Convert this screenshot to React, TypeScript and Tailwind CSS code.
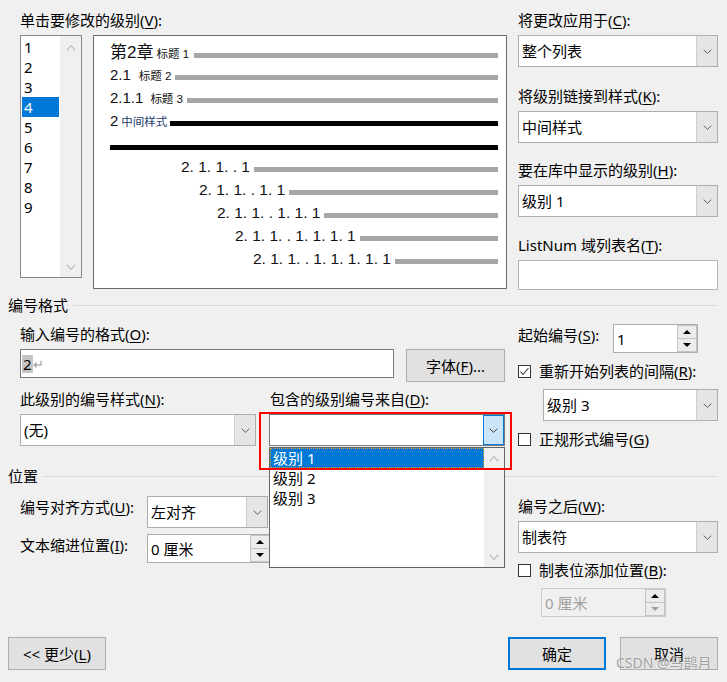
import React from 'react'

function Chevron({ up = false, color = '#606060', w = 9, h = 5, sw = 1 }: { up?: boolean; color?: string; w?: number; h?: number; sw?: number }) {
  const d = up ? `M0.7 ${h - 0.7}L${w / 2} 0.7L${w - 0.7} ${h - 0.7}` : `M0.7 0.7L${w / 2} ${h - 0.7}L${w - 0.7} 0.7`
  return (
    <svg width={w} height={h} viewBox={`0 0 ${w} ${h}`} className="block">
      <path d={d} fill="none" stroke={color} strokeWidth={sw} />
    </svg>
  )
}

function Tri({ up = false, color = '#000' }: { up?: boolean; color?: string }) {
  return (
    <svg width="8" height="4" viewBox="0 0 8 4" className="block">
      <polygon points={up ? '0,4 4,0 8,4' : '0,0 8,0 4,4'} fill={color} />
    </svg>
  )
}

function Select({ value, className = '' }: { value: string; className?: string }) {
  return (
    <div className={`flex h-[32px] border border-[#adadad] bg-white ${className}`}>
      <div className="flex flex-1 items-center overflow-hidden whitespace-nowrap pl-[3px]">{value}</div>
      <div className="flex w-[21px] items-center justify-center border-l border-[#cfcfcf] bg-[#e5e5e5]">
        <Chevron />
      </div>
    </div>
  )
}

function Spin({ value, className = '', disabled = false }: { value: string; className?: string; disabled?: boolean }) {
  return (
    <div
      className={`flex h-[29px] border ${disabled ? 'border-[#cccccc] bg-[#f0f0f0] text-[#a0a0a0]' : 'border-[#adadad] bg-white'} ${className}`}
    >
      <div className="flex flex-1 items-center whitespace-nowrap pl-[3px]">{value}</div>
      <div className="flex w-[20px] flex-col">
        <div className="flex flex-1 items-center justify-center border border-[#c4c4c4] bg-[#ececec]">
          <Tri up />
        </div>
        <div className="flex flex-1 items-center justify-center border border-t-0 border-[#c4c4c4] bg-[#ececec]">
          <Tri color={disabled ? '#a0a0a0' : '#000'} />
        </div>
      </div>
    </div>
  )
}

function Check({ checked = false }: { checked?: boolean }) {
  return (
    <div className="flex h-[13px] w-[13px] items-center justify-center border border-[#333333] bg-white">
      {checked && (
        <svg width="11" height="11" viewBox="0 0 11 11">
          <path d="M1.5 5.5L4 8.5L9.5 2" fill="none" stroke="#333" strokeWidth="1.1" />
        </svg>
      )}
    </div>
  )
}

function Btn({ children, className = '', primary = false }: { children: React.ReactNode; className?: string; primary?: boolean }) {
  return (
    <div
      className={`flex h-[33px] w-[98px] items-center justify-center bg-[#e1e1e1] ${primary ? 'border-2 border-[#0078d7]' : 'border border-[#adadad]'} ${className}`}
    >
      {children}
    </div>
  )
}

function Key({ k }: { k: string }) {
  return <u className="underline-offset-2">{k}</u>
}

const levels = ['1', '2', '3', '4', '5', '6', '7', '8', '9']

const deepRows = [
  { indent: 'ml-[71px]', text: '2. 1. 1. . 1' },
  { indent: 'ml-[89px]', text: '2. 1. 1. . 1. 1' },
  { indent: 'ml-[107px]', text: '2. 1. 1. . 1. 1. 1' },
  { indent: 'ml-[125px]', text: '2. 1. 1. . 1. 1. 1. 1' },
  { indent: 'ml-[143px]', text: '2. 1. 1. . 1. 1. 1. 1. 1' },
]

export default function App() {
  return (
    <div className="relative h-[682px] w-[727px] overflow-hidden bg-[#f0f0f0] font-['Noto_Sans','Noto_Sans_CJK_SC',sans-serif] text-[15px] leading-[18px] text-black">
      {/* top: level list, preview, right options */}
      <div className="flex pt-[11px]">
        <div className="ml-[20px] flex flex-col">
          <div>
            单击要修改的级别(<Key k="V" />):
          </div>
          <div className="mt-[6px] flex items-start gap-[11px]">
            <div className="flex h-[243px] w-[62px] border border-[#828790] bg-white">
              <div className="flex flex-1 flex-col px-[1px] pt-[1px]">
                {levels.map((l) => (
                  <div
                    key={l}
                    className={`flex h-[20px] items-center pl-[2px] ${l === '4' ? 'bg-[#0078d7] text-white' : ''}`}
                  >
                    {l}
                  </div>
                ))}
              </div>
              <div className="flex w-[21px] flex-col items-center justify-between bg-[#f0f0f0] pb-[7px] pt-[9px]">
                <Chevron up color="#c2c2c2" w={10} h={6} sw={1.4} />
                <Chevron color="#c2c2c2" w={10} h={6} sw={1.4} />
              </div>
            </div>

            <div className="flex h-[254px] w-[414px] flex-col border border-[#6b6b6b] bg-white pl-[16px] pr-[8px] pt-[8px] font-['Liberation_Sans','Noto_Sans_CJK_SC',sans-serif] text-[#111]">
              <div className="flex h-[23px] items-baseline">
                <span className="text-[17px] leading-none">第2章</span>
                <span className="ml-[3px] text-[11.5px] leading-none">标题 1</span>
                <div className="ml-[5px] h-[5px] flex-1 bg-[#a6a6a6]" />
              </div>
              <div className="flex h-[23px] items-baseline">
                <span className="text-[15px] leading-none">2.1</span>
                <span className="ml-[8px] text-[11.5px] leading-none">标题 2</span>
                <div className="ml-[4px] h-[5px] flex-1 bg-[#a6a6a6]" />
              </div>
              <div className="flex h-[23px] items-baseline">
                <span className="text-[15px] leading-none">2.1.1</span>
                <span className="ml-[7px] text-[11.5px] leading-none">标题 3</span>
                <div className="ml-[4px] h-[5px] flex-1 bg-[#a6a6a6]" />
              </div>
              <div className="flex h-[23px] items-baseline">
                <span className="text-[15px] leading-none">2</span>
                <span className="ml-[3px] text-[11.5px] leading-none text-[#1c3a6e]">中间样式</span>
                <div className="ml-[3px] h-[5px] flex-1 bg-black" />
              </div>
              <div className="flex h-[23px] items-start pt-[9px]">
                <div className="h-[5px] flex-1 bg-black" />
              </div>
              {deepRows.map((r) => (
                <div key={r.text} className={`flex h-[23px] items-baseline ${r.indent}`}>
                  <span className="whitespace-pre text-[15.5px] leading-none">{r.text}</span>
                  <div className="ml-[4px] h-[5px] flex-1 bg-[#a6a6a6]" />
                </div>
              ))}
            </div>
          </div>
        </div>

        <div className="ml-[11px] flex w-[200px] flex-col">
          <div>
            将更改应用于(<Key k="C" />):
          </div>
          <Select value="整个列表" className="mt-[6px]" />
          <div className="mt-[20px]">
            将级别链接到样式(<Key k="K" />):
          </div>
          <Select value="中间样式" className="mt-[6px]" />
          <div className="mt-[18px]">
            要在库中显示的级别(<Key k="H" />):
          </div>
          <Select value="级别 1" className="mt-[6px]" />
          <div className="mt-[19px]">
            ListNum 域列表名(<Key k="T" />):
          </div>
          <div className="mt-[6px] h-[30px] border border-[#b4b4b4] bg-white" />
        </div>
      </div>

      {/* 编号格式 */}
      <div className="mt-[6px] flex items-center pl-[8px] pr-[9px]">
        <span>编号格式</span>
        <div className="ml-[5px] h-px flex-1 bg-[#dadada]" />
      </div>
      <div className="flex">
        <div className="ml-[20px] flex w-[485px] flex-col">
          <div className="mt-[11px]">
            输入编号的格式(<Key k="O" />):
          </div>
          <div className="mt-[6px] flex items-start">
            <div className="flex h-[29px] w-[374px] items-center border border-[#7a7a7a] bg-white pl-[1px]">
              <span className="bg-[#c4c4c4] px-[1px]">2</span>
              <span className="text-[13px] text-[#9a9a9a]">↵</span>
            </div>
            <Btn className="ml-[12px] w-[99px]">
              字体(<Key k="F" />)...
            </Btn>
          </div>
          <div className="mt-[8px] flex">
            <div className="w-[250px]">
              此级别的编号样式(<Key k="N" />):
            </div>
            <div>
              包含的级别编号来自(<Key k="D" />):
            </div>
          </div>
          <div className="mt-[6px] flex">
            <Select value="(无)" className="w-[236px]" />
            <div className="ml-[13px] flex h-[32px] w-[236px] border border-[#7a7a7a] bg-white">
              <div className="flex-1" />
              <div className="flex w-[21px] items-center justify-center border border-[#0078d7] bg-[#cce4f7]">
                <Chevron color="#3a3a3a" />
              </div>
            </div>
          </div>
        </div>

        <div className="ml-[13px] flex w-[200px] flex-col">
          <div className="mt-[10px] flex items-start">
            <div className="mt-[2px] w-[95px]">
              起始编号(<Key k="S" />):
            </div>
            <Spin value="1" className="w-[85px]" />
          </div>
          <div className="mt-[9px] flex h-[18px] items-center">
            <Check checked />
            <span className="ml-[8px]">
              重新开始列表的间隔(<Key k="R" />):
            </span>
          </div>
          <Select value="级别 3" className="ml-[25px] mt-[9px] w-[175px]" />
          <div className="mt-[9px] flex h-[18px] items-center">
            <Check />
            <span className="ml-[8px]">
              正规形式编号(<Key k="G" />)
            </span>
          </div>
        </div>
      </div>

      {/* 位置 */}
      <div className="mt-[19px] flex items-center pl-[8px] pr-[9px]">
        <span>位置</span>
        <div className="ml-[5px] h-px flex-1 bg-[#dadada]" />
      </div>
      <div className="flex">
        <div className="ml-[20px] flex w-[485px] flex-col">
          <div className="mt-[11px] flex items-start">
            <div className="mt-[2px] w-[127px]">
              编号对齐方式(<Key k="U" />):
            </div>
            <Select value="左对齐" className="w-[121px]" />
          </div>
          <div className="mt-[6px] flex items-start">
            <div className="mt-[2px] w-[127px]">
              文本缩进位置(<Key k="I" />):
            </div>
            <Spin value="0 厘米" className="w-[124px]" />
          </div>
        </div>
        <div className="ml-[13px] flex w-[200px] flex-col">
          <div className="mt-[12px]">
            编号之后(<Key k="W" />):
          </div>
          <Select value="制表符" className="mt-[6px]" />
          <div className="mt-[8px] flex h-[18px] items-center">
            <Check />
            <span className="ml-[8px]">
              制表位添加位置(<Key k="B" />):
            </span>
          </div>
          <Spin value="0 厘米" disabled className="ml-[23px] mt-[9px] w-[125px]" />
        </div>
      </div>

      {/* buttons */}
      <div className="mt-[20px] flex pl-[8px] pr-[9px]">
        <Btn>
          {'<< 更少('}
          <Key k="L" />)
        </Btn>
        <Btn primary className="ml-auto">
          确定
        </Btn>
        <Btn className="ml-[14px]">取消</Btn>
      </div>

      {/* open dropdown of 包含的级别编号来自 */}
      <div className="absolute left-[269px] top-[447px] flex h-[121px] w-[236px] border border-[#646464] bg-white">
        <div className="flex flex-1 flex-col">
          <div className="flex h-[20px] items-center bg-[#0078d7] pl-[3px] text-white outline-1 -outline-offset-1 outline-dotted outline-[#e0a040]">
            级别 1
          </div>
          <div className="flex h-[20px] items-center pl-[3px]">级别 2</div>
          <div className="flex h-[20px] items-center pl-[3px]">级别 3</div>
        </div>
        <div className="flex w-[20px] flex-col items-center justify-between bg-[#f0f0f0] pb-[7px] pt-[8px]">
          <Chevron up color="#c2c2c2" w={10} h={6} sw={1.4} />
          <Chevron color="#c2c2c2" w={10} h={6} sw={1.4} />
        </div>
      </div>

      {/* red highlight box */}
      <div className="absolute left-[259px] top-[412px] h-[58px] w-[253px] border-2 border-[#ff0000]" />

      {/* watermark */}
      <div className="absolute left-[616px] top-[654px] text-[14px] text-[#9a9a9a] opacity-90 [text-shadow:0_0_2px_#ffffff]">
        CSDN @马鹊月
      </div>
    </div>
  )
}
